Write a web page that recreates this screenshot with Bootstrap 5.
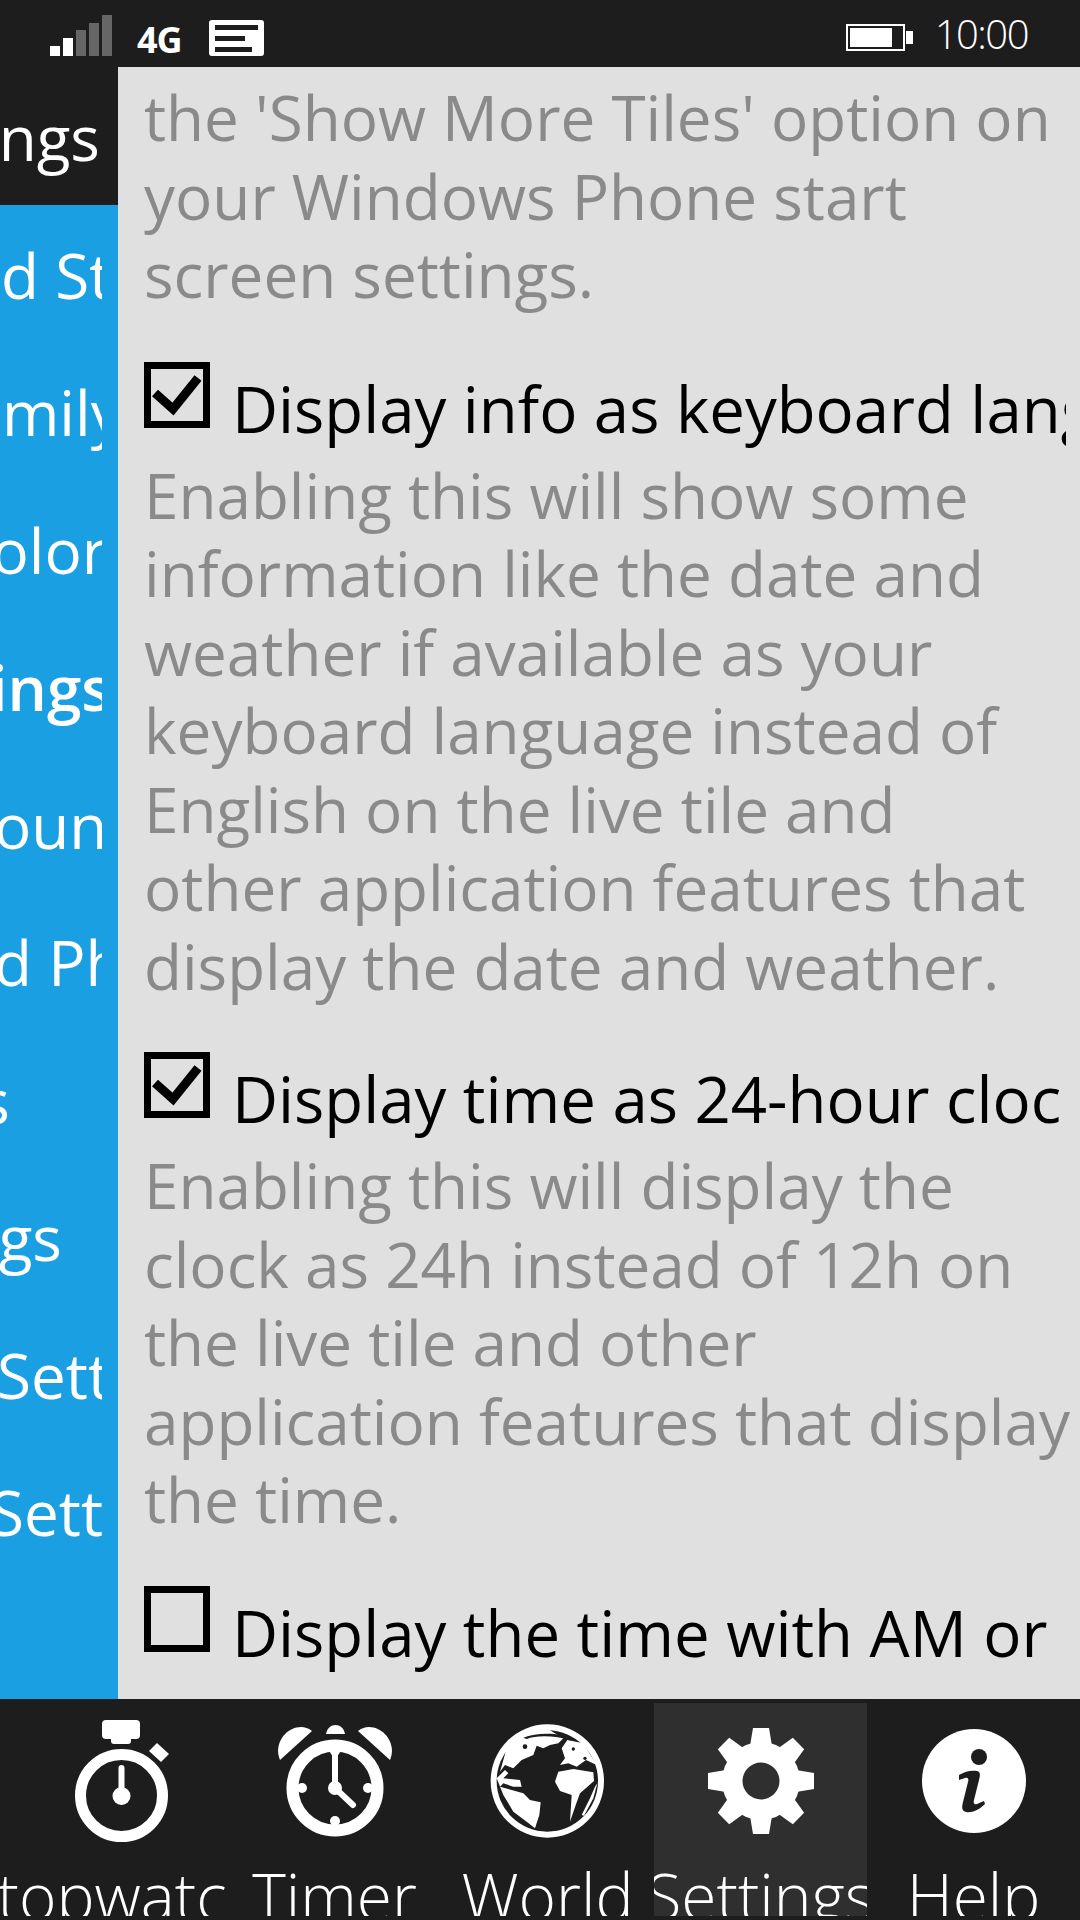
<!DOCTYPE html>
<html lang="en">
<head>
<meta charset="UTF-8">
<title>Settings</title>
<link href="https://cdn.jsdelivr.net/npm/bootstrap@5.3.3/dist/css/bootstrap.min.css" rel="stylesheet">
<script src="https://cdn.jsdelivr.net/npm/bootstrap@5.3.3/dist/js/bootstrap.bundle.min.js"></script>
<style>
html, body { width: 1080px; height: 1920px; overflow: hidden; background: #1d1d1d; }
body { font-family: "Open Sans", "Noto Sans", sans-serif; font-weight: 400; }
.phone { width: 1080px; height: 1920px; }
.status-bar { height: 67px; background: #1d1d1d; color: #fff; padding-left: 50px; padding-right: 52px; }
.signal { height: 41px; gap: 3px; margin-top: 15px; }
.signal i { display: block; width: 10px; background: #666; }
.signal i.on { background: #fff; }
.signal i:nth-child(1) { height: 10px; }
.signal i:nth-child(2) { height: 18px; }
.signal i:nth-child(3) { height: 26px; }
.signal i:nth-child(4) { height: 33px; }
.signal i:nth-child(5) { height: 41px; }
.net { font-weight: 700; font-size: 36px; line-height: 1; margin-left: 25px; margin-top: 22px; letter-spacing: -1px; }
.msg-icon { margin-left: 27px; margin-top: 20px; }
.clock-text { font-size: 40px; font-weight: 300; letter-spacing: -1.5px; line-height: 1; margin-left: 22px; margin-top: 14px; }
.batt-icon { margin-top: 24px; }
.main-area { height: 1632px; }
.side-col { width: 118px; background: #1b9fe3; overflow: hidden; color: #fff; }
.side-title { height: 137px; background: #1d1d1d; }
.side-row { width: 102px; height: 137.5px; overflow: hidden; white-space: nowrap; font-size: 62px; line-height: 141px; }
.side-row span { display: block; }
.side-title.side-row { width: 118px; }
.side-active { font-weight: 600; }
.side-col .side-row:nth-child(1) span { margin-left: -130px; }
.side-col .side-row:nth-child(2) span { margin-left: -308px; }
.side-col .side-row:nth-child(3) span { margin-left: -210px; }
.side-col .side-row:nth-child(4) span { margin-left: -193px; }
.side-col .side-row:nth-child(5) span { margin-left: -250px; }
.side-col .side-row:nth-child(6) span { margin-left: -40px; }
.side-col .side-row:nth-child(7) span { margin-left: -315px; }
.side-col .side-row:nth-child(8) span { margin-left: -120px; }
.side-col .side-row:nth-child(9) span { margin-left: -168px; }
.side-col .side-row:nth-child(10) span { margin-left: -3px; }
.side-col .side-row:nth-child(11) span { margin-left: -10px; }
.pane { flex: 1; background: #e0e0e0; padding: 0 14px 0 26px; overflow: hidden; min-width: 0; }
.pane-inner { margin-top: 11px; }
.hint { font-size: 62px; line-height: 78.5px; color: #8a8a8a; margin: 0; white-space: nowrap; }
.opt-row { height: 94px; margin-top: 47px; white-space: nowrap; overflow: hidden; color: #000; font-size: 63.5px; line-height: 80px; }
.pane-inner > .opt-row:nth-child(2) { margin-top: 48px; }
.opt-box { width: 66px; height: 66px; border: 7px solid #000; flex: none; margin-right: 22px; }
.opt-label { padding-top: 7px; }
.tab-bar { height: 221px; background: #1d1d1d; padding: 4px 0; color: #fff; }
.tab-cell { width: 213px; overflow: hidden; white-space: nowrap; text-align: center; }
.tab-cell:first-child { width: 228px; padding-left: 15px; }
.tab-cell:first-child .tab-name span { margin-left: -16px; }
.tab-cell.now { background: #2f2f2f; }
.tab-ico { height: 141px; display: flow-root; }
.tab-ico svg { display: block; margin: 0 auto; }
.tab-ico .globe-ico { margin-top: 12px; }
.tab-name { font-size: 64px; line-height: 104px; height: 72px; display: flex; justify-content: center; font-weight: 300; }
</style>
</head>
<body>
<div class="phone d-flex flex-column">
  <div class="status-bar d-flex">
    <div class="signal d-flex align-items-end">
      <i class="on"></i><i class="on"></i><i></i><i></i><i></i>
    </div>
    <div class="net">4G</div>
    <svg class="msg-icon" width="55" height="36" viewBox="0 0 55 36"><rect width="55" height="36" rx="3" fill="#fff"/><rect x="6" y="5" width="43" height="5" fill="#1d1d1d"/><rect x="6" y="16" width="30" height="5" fill="#1d1d1d"/><rect x="6" y="27" width="37" height="5" fill="#1d1d1d"/></svg>
    <div class="ms-auto d-flex">
      <svg class="batt-icon" width="67" height="27" viewBox="0 0 67 27"><rect x="1" y="1" width="57" height="25" fill="none" stroke="#fff" stroke-width="2"/><rect x="4" y="4" width="42" height="19" fill="#fff"/><rect x="60" y="7" width="7" height="13" fill="#fff"/></svg>
      <div class="clock-text">10:00</div>
    </div>
  </div>

  <div class="main-area d-flex">
    <div class="side-col">
      <div class="side-title side-row"><span>Settings</span></div>
      <div class="side-row"><span>Background Style</span></div>
      <div class="side-row"><span>Font Family</span></div>
      <div class="side-row"><span>Font Color</span></div>
      <div class="side-row side-active"><span>Tile Settings</span></div>
      <div class="side-row"><span>Sound</span></div>
      <div class="side-row"><span>Background Photo</span></div>
      <div class="side-row"><span>Tiles</span></div>
      <div class="side-row"><span>Settings</span></div>
      <div class="side-row"><span>Settings</span></div>
      <div class="side-row"><span>Settings</span></div>
    </div>
    <div class="pane">
      <div class="pane-inner">
        <p class="hint">the 'Show More Tiles' option on<br>your Windows Phone start<br>screen settings.</p>
        <div class="opt-row d-flex">
          <div class="opt-box"><svg class="d-block" width="52" height="52" viewBox="0 0 52 52"><path d="M4 24 L22 40 L47 9" fill="none" stroke="#000" stroke-width="9"/></svg></div>
          <div class="opt-label">Display info as keyboard language</div>
        </div>
        <p class="hint">Enabling this will show some<br>information like the date and<br>weather if available as your<br>keyboard language instead of<br>English on the live tile and<br>other application features that<br>display the date and weather.</p>
        <div class="opt-row d-flex">
          <div class="opt-box"><svg class="d-block" width="52" height="52" viewBox="0 0 52 52"><path d="M4 24 L22 40 L47 9" fill="none" stroke="#000" stroke-width="9"/></svg></div>
          <div class="opt-label">Display time as 24-hour clock</div>
        </div>
        <p class="hint">Enabling this will display the<br>clock as 24h instead of 12h on<br>the live tile and other<br>application features that display<br>the time.</p>
        <div class="opt-row d-flex">
          <div class="opt-box"></div>
          <div class="opt-label">Display the time with AM or PM</div>
        </div>
      </div>
    </div>
  </div>

  <div class="tab-bar d-flex">
    <div class="tab-cell">
      <div class="tab-ico"><svg width="120" height="141" viewBox="0 0 120 141">
        <rect x="40" y="17" width="38" height="19" rx="4" fill="#fff"/><rect x="49" y="30" width="20" height="11" rx="3" fill="#fff"/>
        <path d="M87 48l8-8 12 11-8 8z" fill="#fff"/>
        <circle cx="59.5" cy="92.5" r="41" fill="none" stroke="#fff" stroke-width="11"/>
        <circle cx="59.5" cy="93" r="9" fill="#fff"/><path d="M59.5 65V90" stroke="#fff" stroke-width="6" stroke-linecap="round"/>
      </svg></div>
      <div class="tab-name"><span>Stopwatch</span></div>
    </div>
    <div class="tab-cell">
      <div class="tab-ico"><svg width="120" height="141" viewBox="0 0 120 141">
        <circle cx="60" cy="85" r="42.500" fill="none" stroke="#fff" stroke-width="12"/>
        <path d="M5 57C-2 41 11 24 26 24c4 0 7 1 11 4z" fill="#fff"/><path d="M115 57c7-16-6-33-21-33-4 0-7 1-11 4z" fill="#fff"/><path d="M51 31c2-12 17-12 19 0z" fill="#fff"/>
        <path d="M60 50V85L78 102" fill="none" stroke="#fff" stroke-width="6" stroke-linecap="round" stroke-linejoin="round"/>
        <circle cx="60" cy="85" r="7" fill="#fff"/><circle cx="60" cy="48" r="5" fill="#fff"/>
        <circle cx="27" cy="85" r="5" fill="#fff"/><circle cx="93" cy="85" r="5" fill="#fff"/><circle cx="60" cy="118" r="5" fill="#fff"/>
      </svg></div>
      <div class="tab-name"><span>Timer</span></div>
    </div>
    <div class="tab-cell">
      <div class="tab-ico"><svg class="globe-ico" width="135" height="129" viewBox="0 0 405 387">
        <circle cx="202" cy="198" r="170" fill="#fff"/>
        <circle cx="202" cy="198" r="152" fill="#1d1d1d"/>
        <path fill="#fff" d="M60 170L75 150 100 160 125 135 160 120 170 92 190 100 210 90 235 85 250 70 200 40 130 50 80 100Z"/>
        <path fill="#fff" d="M50 190L75 165 85 175 70 190 120 195 125 215 100 215 70 205 60 215 130 235 150 255 182 262 178 300 165 340 140 320 100 290 70 240Z"/>
        <path fill="#fff" d="M225 200L235 170 280 162 340 172 342 198 300 235 288 268 270 320 275 240 240 228Z"/>
        <path fill="#fff" d="M240 150L255 130 245 100 262 75 310 85 350 150 318 135 290 155 265 145Z"/>
        <path fill="#fff" d="M345 215L352 205 340 250 312 302 305 300 330 250Z"/>
        <path fill="#1d1d1d" d="M130 68C170 52 240 52 285 72L270 76C230 62 170 60 140 72Z"/>
        <circle cx="135" cy="95" r="7" fill="#1d1d1d"/><circle cx="280" cy="102" r="5" fill="#1d1d1d"/><circle cx="315" cy="130" r="5" fill="#1d1d1d"/>
      </svg></div>
      <div class="tab-name"><span>World</span></div>
    </div>
    <div class="tab-cell now">
      <div class="tab-ico"><svg width="120" height="141" viewBox="0 0 120 141">
        <defs><path id="gear-tooth" d="M52 25h16l4 24H48z" fill="#fff"/></defs>
        <circle cx="60" cy="78" r="39" fill="#fff"/>
        <use href="#gear-tooth"/>
        <use href="#gear-tooth" transform="rotate(45 60 78)"/>
        <use href="#gear-tooth" transform="rotate(90 60 78)"/>
        <use href="#gear-tooth" transform="rotate(135 60 78)"/>
        <use href="#gear-tooth" transform="rotate(180 60 78)"/>
        <use href="#gear-tooth" transform="rotate(225 60 78)"/>
        <use href="#gear-tooth" transform="rotate(270 60 78)"/>
        <use href="#gear-tooth" transform="rotate(315 60 78)"/>
        <circle cx="60" cy="78" r="18.500" fill="#2f2f2f"/>
      </svg></div>
      <div class="tab-name"><span>Settings</span></div>
    </div>
    <div class="tab-cell">
      <div class="tab-ico"><svg width="120" height="141" viewBox="0 0 120 141">
        <circle cx="60" cy="78" r="52" fill="#fff"/>
        <circle cx="65" cy="54" r="8" fill="#1d1d1d"/>
        <path d="M45 72c6-4 13-5 18-4 4 1 3 5 2 9l-5 20c-1 4 1 5 3 4l7-3 1 3c-6 6-13 9-19 8-5-1-4-6-3-10l5-20c1-3 0-5-3-4l-6 2z" fill="#1d1d1d"/>
      </svg></div>
      <div class="tab-name"><span>Help</span></div>
    </div>
  </div>
</div>
</body>
</html>
